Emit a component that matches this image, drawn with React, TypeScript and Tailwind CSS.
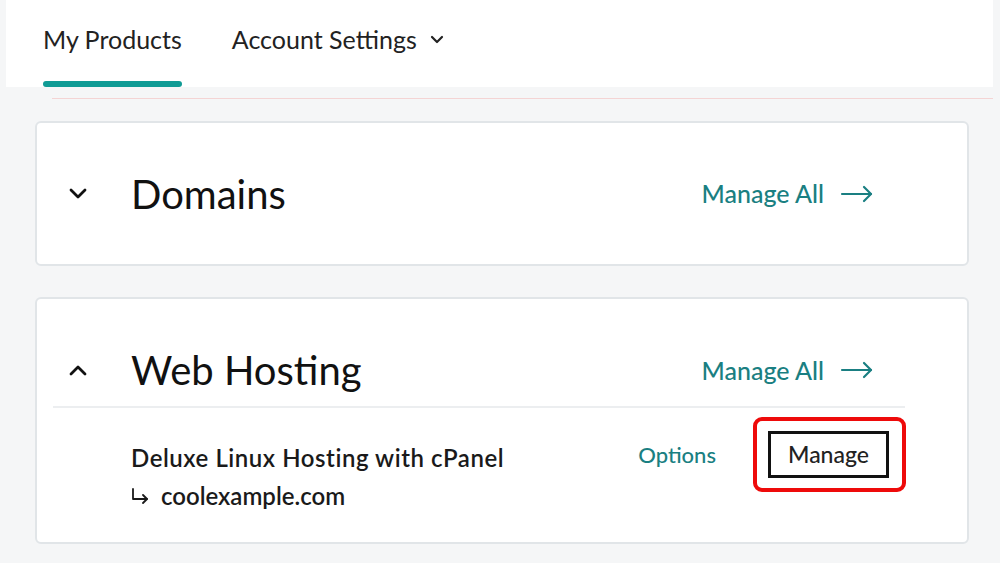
import React from "react";

const TEAL = "text-[#1a7f82]";

function ChevronDown({ className = "" }: { className?: string }) {
  return (
    <svg width="20" height="12" viewBox="0 0 20 12" fill="none" stroke="currentColor" strokeWidth="2.8" strokeLinecap="round" strokeLinejoin="round" className={className}>
      <polyline points="3,2 10,9 17,2" />
    </svg>
  );
}

function ChevronUp({ className = "" }: { className?: string }) {
  return (
    <svg width="20" height="12" viewBox="0 0 20 12" fill="none" stroke="currentColor" strokeWidth="2.8" strokeLinecap="round" strokeLinejoin="round" className={className}>
      <polyline points="3,10 10,3 17,10" />
    </svg>
  );
}

function LongArrow() {
  return (
    <svg width="34" height="18" viewBox="0 0 34 18" fill="none" stroke="currentColor" strokeWidth="2.2" strokeLinecap="round" strokeLinejoin="round">
      <line x1="2" y1="9" x2="31" y2="9" />
      <polyline points="24,2 31,9 24,16" />
    </svg>
  );
}

function ManageAll() {
  return (
    <a href="#" className={`flex items-center gap-[16px] text-[25px] font-medium leading-none ${TEAL}`}>
      Manage All
      <LongArrow />
    </a>
  );
}

export default function App() {
  return (
    <div className="w-[1000px] h-[563px] overflow-hidden bg-[#f5f6f7] font-['Lato','Liberation_Sans',sans-serif] text-[#111]">
      {/* Tabs */}
      <header className="ml-[6px] w-[987px] h-[87px] bg-white flex items-end">
        <nav className="flex items-end gap-[50px] ml-[37px]">
          <a href="#" className="flex flex-col">
            <span className="text-[25px] leading-[30px] text-[#222] whitespace-nowrap">My Products</span>
            <span className="mt-[27px] h-[6px] rounded-full bg-[#109b95]" />
          </a>
          <a href="#" className="flex items-center gap-[13px] pb-[33px] text-[25px] leading-[30px] text-[#222] whitespace-nowrap">
            Account Settings
            <svg width="14" height="9" viewBox="0 0 14 9" fill="none" stroke="currentColor" strokeWidth="2.2" strokeLinecap="round" strokeLinejoin="round">
              <polyline points="2,2 7,7 12,2" />
            </svg>
          </a>
        </nav>
      </header>
      <div className="mt-[11px] ml-[52px] w-[941px] h-px bg-[#f4d4d4]" />

      <main className="ml-[35px] w-[934px] mt-[22px] flex flex-col gap-[31px]">
        {/* Domains */}
        <section className="h-[145px] bg-white border-2 border-[#e1e5e8] rounded-[6px] flex items-center pl-[31px] pr-[93px]">
          <ChevronDown className="mr-[43px]" />
          <h2 className="flex-1 text-[40px] leading-none">Domains</h2>
          <ManageAll />
        </section>

        {/* Web Hosting */}
        <section className="h-[247px] bg-white border-2 border-[#e1e5e8] rounded-[6px] flex flex-col">
          <div className="h-[40px] mt-[51px] flex items-center pl-[31px] pr-[93px]">
            <ChevronUp className="mr-[43px]" />
            <h2 className="flex-1 text-[40px] leading-none">Web Hosting</h2>
            <ManageAll />
          </div>
          <div className="mt-[16px] ml-[16px] mr-[62px] h-[2px] bg-[#eceef0]" />
          <div className="flex items-start justify-between pl-[94px] pr-[78px] pt-[23px]">
            <div className="flex flex-col pt-[13px]">
              <span className="text-[24px] leading-[28px] font-semibold tracking-[0.55px] text-[#1a1a1a]">Deluxe Linux Hosting with cPanel</span>
              <span className="mt-[10px] flex items-center gap-[12px] text-[24px] leading-[28px] font-semibold text-[#1a1a1a]">
                <svg width="18" height="16" viewBox="0 0 18 16" fill="none" stroke="currentColor" strokeWidth="1.8" strokeLinecap="round" strokeLinejoin="round">
                  <polyline points="2,1 2,11 16,11" />
                  <polyline points="12,7 16,11 12,15" />
                </svg>
                coolexample.com
              </span>
            </div>
            <div className="flex items-center gap-[52px]">
              <a href="#" className={`text-[22px] leading-none font-medium ${TEAL}`}>Options</a>
              <div className="relative">
                <button className="w-[121px] h-[47px] border-[3px] border-[#111] bg-white text-[23px] font-medium text-[#222]">
                  Manage
                </button>
                <div className="absolute -left-[15px] -right-[17px] -top-[14px] -bottom-[14px] border-4 border-[#ee0a0a] rounded-[9px] pointer-events-none" />
              </div>
            </div>
          </div>
        </section>
      </main>
    </div>
  );
}
